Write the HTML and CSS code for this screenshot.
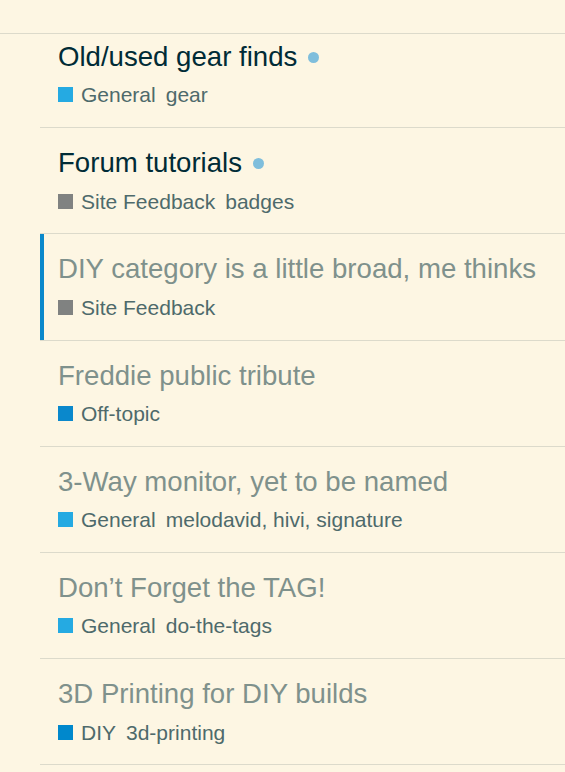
FILE: index.html
```html
<!DOCTYPE html>
<html lang="en">
<head>
<meta charset="utf-8">
<title>Topics</title>
<link rel="stylesheet" href="styles.css">
</head>
<body>
<header class="topbar"></header>
<main class="topic-list">
  <div class="topic-row first-row">
    <div class="title-line"><span class="title unread">Old/used gear finds</span><span class="new-dot"></span></div>
    <div class="meta"><span class="category"><span class="swatch cat-general"></span>General</span><span class="tags">gear</span></div>
  </div>
  <div class="topic-row">
    <div class="title-line"><span class="title unread">Forum tutorials</span><span class="new-dot"></span></div>
    <div class="meta"><span class="category"><span class="swatch cat-feedback"></span>Site Feedback</span><span class="tags">badges</span></div>
  </div>
  <div class="topic-row selected">
    <div class="title-line"><span class="title">DIY category is a little broad, me thinks</span></div>
    <div class="meta"><span class="category"><span class="swatch cat-feedback"></span>Site Feedback</span></div>
  </div>
  <div class="topic-row">
    <div class="title-line"><span class="title">Freddie public tribute</span></div>
    <div class="meta"><span class="category"><span class="swatch cat-offtopic"></span>Off-topic</span></div>
  </div>
  <div class="topic-row">
    <div class="title-line"><span class="title">3-Way monitor, yet to be named</span></div>
    <div class="meta"><span class="category"><span class="swatch cat-general"></span>General</span><span class="tags">melodavid, hivi, signature</span></div>
  </div>
  <div class="topic-row">
    <div class="title-line"><span class="title">Don’t Forget the TAG!</span></div>
    <div class="meta"><span class="category"><span class="swatch cat-general"></span>General</span><span class="tags">do-the-tags</span></div>
  </div>
  <div class="topic-row">
    <div class="title-line"><span class="title">3D Printing for DIY builds</span></div>
    <div class="meta"><span class="category"><span class="swatch cat-diy"></span>DIY</span><span class="tags">3d-printing</span></div>
  </div>
</main>
</body>
</html>
```

FILE: styles.css
```css
html, body {
  margin: 0;
  padding: 0;
  background: #fdf6e3;
  font-family: "Liberation Sans", Arial, sans-serif;
  overflow: hidden;
}

.topbar {
  height: 33px;
  border-bottom: 1px solid #dcdacb;
  background: #fdf6e3;
}

.topic-list {
  margin-left: 40px;
  display: flex;
  flex-direction: column;
}

.topic-row {
  padding: 19px 0 20.8px 18px;
  border-bottom: 1px solid #dcdacb;
  display: flex;
  flex-direction: column;
  gap: 11.4px;
}

.topic-row.first-row {
  padding-top: 7px;
}

.topic-row.selected {
  box-shadow: inset 4px 0 0 #0a88cb;
}

.title-line {
  display: flex;
  align-items: center;
  font-size: 27.6px;
  line-height: 31px;
  white-space: nowrap;
}

.title {
  color: #7f918c;
}

.title.unread {
  color: #002b36;
}

.new-dot {
  width: 11px;
  height: 11px;
  border-radius: 50%;
  background: #7fbedc;
  margin-left: 11px;
  margin-top: 1px;
}

.meta {
  display: flex;
  align-items: center;
  gap: 10px;
  font-size: 21px;
  line-height: 23px;
  color: #4e6a6b;
  white-space: nowrap;
}

.category {
  display: flex;
  align-items: center;
  gap: 8px;
}

.swatch {
  width: 15px;
  height: 15px;
  display: inline-block;
}

.cat-general { background: #25aae2; }
.cat-feedback { background: #808281; }
.cat-offtopic { background: #0a88cc; }
.cat-diy { background: #0088cc; }
```
